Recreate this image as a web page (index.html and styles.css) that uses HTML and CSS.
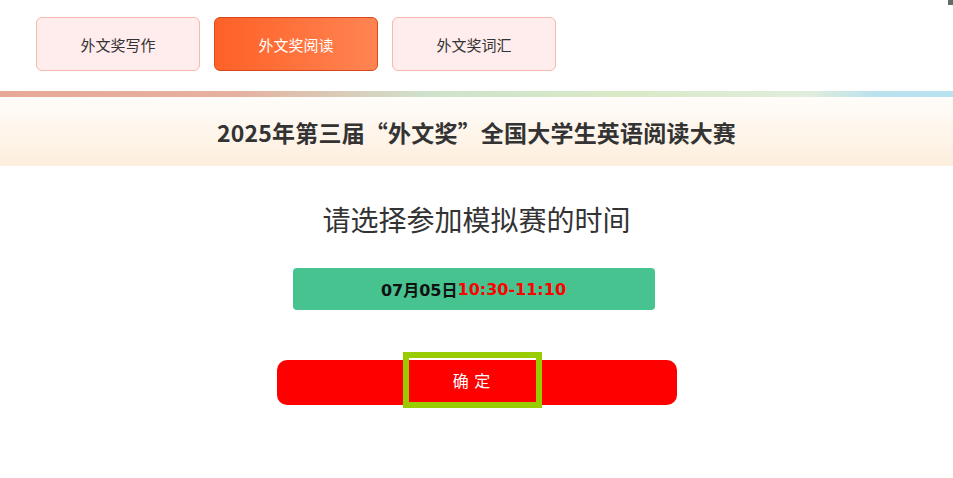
FILE: index.html
```html
<!DOCTYPE html>
<html lang="zh-CN">
<head>
<meta charset="utf-8">
<title>外文奖阅读</title>
<link rel="stylesheet" href="styles.css">
</head>
<body>
<div class="corner"></div>
<header class="topbar">
  <nav class="tabs">
    <a class="tab">外文奖写作</a>
    <a class="tab active">外文奖阅读</a>
    <a class="tab">外文奖词汇</a>
  </nav>
</header>
<div class="strip"></div>
<section class="banner">
  <h1 class="title">2025年第三届“外文奖”全国大学生英语阅读大赛</h1>
</section>
<main class="content">
  <h2 class="subtitle">请选择参加模拟赛的时间</h2>
  <div class="slot"><span class="date">07月05日</span><span class="time">10:30-11:10</span></div>
  <button class="confirm"><span class="confirm-label">确 定</span></button>
</main>
</body>
</html>
```
FILE: styles.css
```css
* { box-sizing: border-box; }
html, body { margin: 0; padding: 0; background: #fff; }
body {
  font-family: "Noto Sans CJK SC", "Noto Sans", sans-serif;
  color: #333;
  width: 953px;
  height: 478px;
  overflow: hidden;
  position: relative;
}
.corner {
  position: absolute;
  top: 0;
  right: 0;
  width: 5px;
  height: 5px;
  background: #5f6b6b;
}
.topbar {
  height: 91px;
  padding: 17px 0 0 36px;
  background: #fff;
}
.tabs { display: flex; gap: 14px; }
.tab {
  width: 164px;
  height: 54px;
  display: flex;
  align-items: center;
  justify-content: center;
  border: 1px solid #f9b7ae;
  border-radius: 6px;
  background: #ffecec;
  font-size: 15px;
  color: #333;
}
.tab.active {
  background: linear-gradient(90deg, #ff6127, #ff8452);
  border-color: #d9481c;
  color: #fff;
}
.strip {
  height: 6px;
  background: linear-gradient(90deg, #e8a897 0%, #e6b1a0 25%, #cfe2cc 45%, #d8eac6 65%, #e0eddc 85%, #b9e2ef 92%, #b7e2ef 100%);
}
.banner {
  height: 69px;
  background: linear-gradient(180deg, #fffdfa, #fdeedd);
  display: flex;
  align-items: center;
  justify-content: center;
}
.title {
  margin: 0;
  font-size: 23px;
  font-weight: 700;
  color: #333;
  letter-spacing: 0.2px;
}
.content {
  display: flex;
  flex-direction: column;
  align-items: center;
  padding-top: 33px;
}
.subtitle {
  margin: 0;
  font-size: 28px;
  font-weight: 400;
  line-height: 40px;
  color: #333;
}
.slot {
  margin-top: 29px;
  margin-left: -6px;
  width: 362px;
  height: 42px;
  border-radius: 4px;
  background: #46c38f;
  display: flex;
  align-items: center;
  justify-content: center;
  font-family: "DejaVu Sans", "Noto Sans CJK SC", sans-serif;
  font-size: 16px;
  font-weight: 700;
}
.date { color: #111; }
.time { color: #ff0000; }
.confirm {
  margin-top: 50px;
  width: 400px;
  height: 45px;
  border: 0;
  border-radius: 10px;
  background: #ff0000;
  padding: 0;
  display: flex;
  justify-content: center;
  align-items: flex-start;
  font-family: inherit;
  cursor: pointer;
}
.confirm-label {
  width: 127px;
  height: 44px;
  margin-top: -2px;
  margin-right: 9px;
  display: flex;
  align-items: center;
  justify-content: center;
  outline: 6px solid #99cc00;
  color: #fff;
  font-size: 16px;
  letter-spacing: 1px;
}
```
